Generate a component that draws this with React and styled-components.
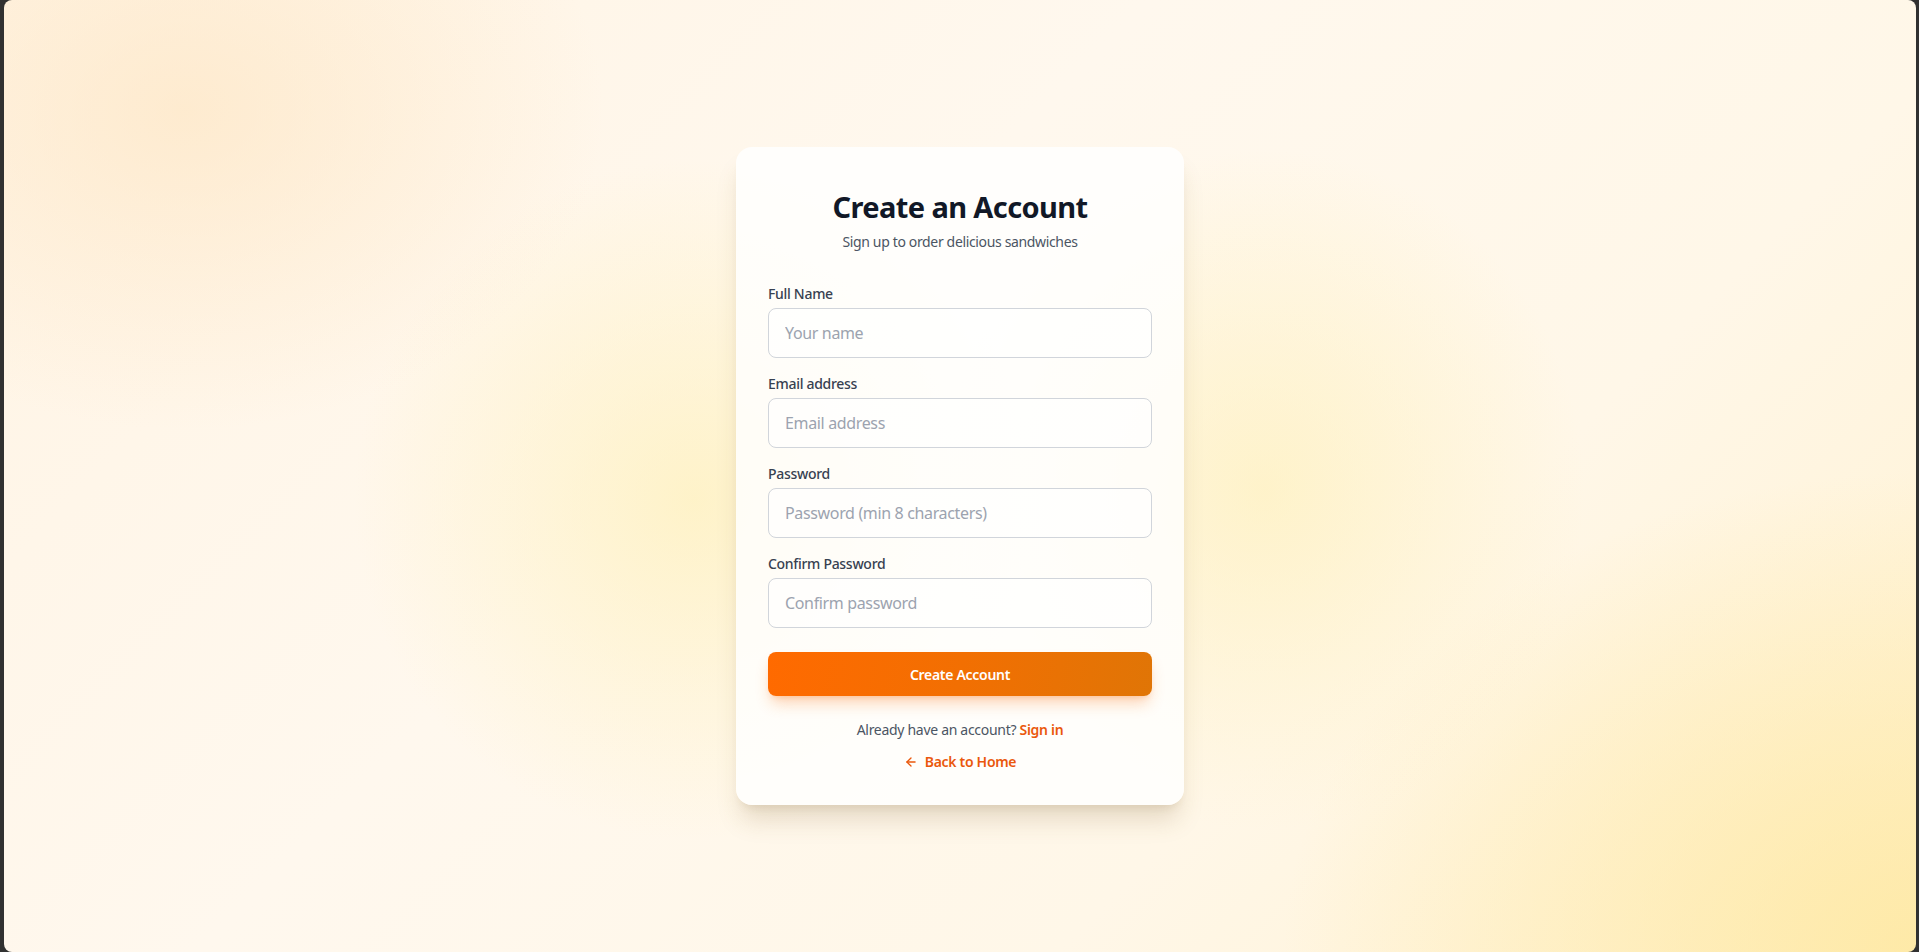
import React from 'react';
import styled, { createGlobalStyle } from 'styled-components';
import { ArrowLeft } from 'lucide-react';

const FONT = `"Segoe UI", "Noto Sans", "Open Sans", sans-serif`;

const GlobalStyle = createGlobalStyle`
  * {
    box-sizing: border-box;
  }
  body {
    margin: 0;
    background: #313131;
    font-family: ${FONT};
  }
`;

const Page = styled.div`
  height: 952px;
  margin: 0 3px 0 4px;
  border-radius: 8px;
  overflow: hidden;
  display: flex;
  align-items: center;
  justify-content: center;
  background:
    radial-gradient(ellipse 420px 320px at 180px 110px, rgba(253, 228, 192, 0.6), rgba(253, 228, 192, 0) 100%),
    radial-gradient(ellipse 340px 340px at 690px 500px, rgba(254, 240, 185, 0.7), rgba(254, 240, 185, 0) 100%),
    radial-gradient(ellipse 320px 340px at 1260px 490px, rgba(254, 240, 185, 0.65), rgba(254, 240, 185, 0) 100%),
    radial-gradient(ellipse 640px 480px at 1919px 952px, rgba(254, 232, 160, 0.85), rgba(254, 232, 160, 0) 100%),
    linear-gradient(135deg, #fff4e4 0%, #fff8ee 40%, #fff7e8 70%, #fff1cf 100%);
`;

const Card = styled.div`
  width: 448px;
  padding: 42px 32px 33px;
  border-radius: 16px;
  background: rgba(255, 255, 255, 0.82);
  box-shadow: 0 20px 25px -5px rgba(120, 90, 40, 0.18), 0 8px 10px -6px rgba(120, 90, 40, 0.14);
`;

const Header = styled.div`
  text-align: center;
  margin-bottom: 32px;
`;

const Title = styled.h1`
  margin: 0 0 7px;
  font-size: 29px;
  line-height: 36px;
  font-weight: 700;
  letter-spacing: -0.6px;
  color: #111827;
`;

const Subtitle = styled.p`
  margin: 0;
  font-size: 14px;
  line-height: 20px;
  letter-spacing: -0.35px;
  color: #4b5563;
`;

const Form = styled.form`
  display: flex;
  flex-direction: column;
  gap: 16px;
`;

const Field = styled.div`
  display: flex;
  flex-direction: column;
`;

const Label = styled.label`
  font-size: 14px;
  line-height: 20px;
  font-weight: 500;
  letter-spacing: -0.3px;
  color: #374151;
  margin-bottom: 4px;
`;

const Input = styled.input`
  height: 50px;
  padding: 12px 16px;
  border: 1px solid #d1d5db;
  border-radius: 8px;
  background: rgba(255, 255, 255, 0.6);
  font-family: ${FONT};
  font-size: 16px;
  letter-spacing: -0.35px;
  color: #111827;
  outline: none;
  &::placeholder {
    color: #9ca3af;
  }
`;

const SubmitButton = styled.button`
  margin-top: 8px;
  height: 44px;
  border: none;
  border-radius: 8px;
  background: linear-gradient(100deg, #ff6a00 0%, #f26f02 50%, #e07506 100%);
  color: #ffffff;
  font-family: ${FONT};
  font-size: 14px;
  font-weight: 600;
  letter-spacing: -0.3px;
  box-shadow: 0 10px 15px -3px rgba(249, 115, 22, 0.3), 0 4px 6px -4px rgba(249, 115, 22, 0.3);
  cursor: pointer;
`;

const Footer = styled.div`
  margin-top: 24px;
  display: flex;
  flex-direction: column;
  align-items: center;
  gap: 12px;
`;

const Prompt = styled.p`
  margin: 0;
  font-size: 14px;
  line-height: 20px;
  letter-spacing: -0.3px;
  color: #4b5563;
`;

const Link = styled.a`
  display: inline-flex;
  align-items: center;
  gap: ${p => (p.$withIcon ? '7px' : '0')};
  color: #ea580c;
  font-size: 14px;
  line-height: 20px;
  font-weight: 600;
  letter-spacing: -0.3px;
  text-decoration: none;
`;

const fields = [
  { id: 'name', label: 'Full Name', type: 'text', placeholder: 'Your name' },
  { id: 'email', label: 'Email address', type: 'email', placeholder: 'Email address' },
  { id: 'password', label: 'Password', type: 'password', placeholder: 'Password (min 8 characters)' },
  { id: 'confirm', label: 'Confirm Password', type: 'password', placeholder: 'Confirm password' }
];

const App = () => (
  <>
    <GlobalStyle />
    <Page>
      <Card>
        <Header>
          <Title>Create an Account</Title>
          <Subtitle>Sign up to order delicious sandwiches</Subtitle>
        </Header>
        <Form onSubmit={e => e.preventDefault()}>
          {fields.map(({ id, label, type, placeholder }) => (
            <Field key={id}>
              <Label htmlFor={id}>{label}</Label>
              <Input id={id} type={type} placeholder={placeholder} />
            </Field>
          ))}
          <SubmitButton type="submit">Create Account</SubmitButton>
        </Form>
        <Footer>
          <Prompt>
            Already have an account? <Link href="#">Sign in</Link>
          </Prompt>
          <Link href="#" $withIcon>
            <ArrowLeft size={14} strokeWidth={2.25} />
            Back to Home
          </Link>
        </Footer>
      </Card>
    </Page>
  </>
);

export default App;
